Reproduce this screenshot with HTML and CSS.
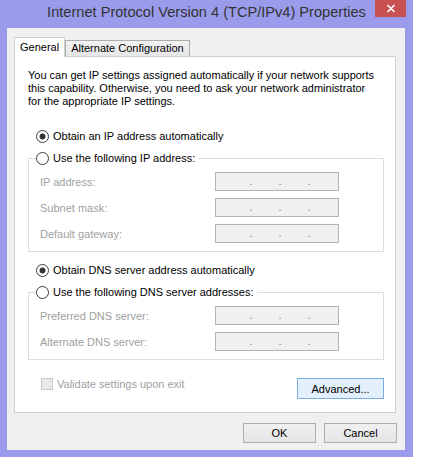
FILE: index.html
```html
<!DOCTYPE html>
<html>
<head>
<meta charset="utf-8">
<title>Internet Protocol Version 4 (TCP/IPv4) Properties</title>
<link rel="stylesheet" href="styles.css">
</head>
<body>
<div class="window">
  <div class="titlebar">
    <span class="title">Internet Protocol Version 4 (TCP/IPv4) Properties</span>
    <button class="close" aria-label="Close">
      <svg width="10" height="9" viewBox="0 0 10 9"><path d="M1.5 1 L8.5 8 M8.5 1 L1.5 8" stroke="#fff" stroke-width="1.6" fill="none"/></svg>
    </button>
  </div>
  <div class="client">
    <div class="tabs">
      <div class="tab active">General</div>
      <div class="tab">Alternate Configuration</div>
    </div>
    <div class="panel">
      <p class="intro">You can get IP settings assigned automatically if your network supports this capability. Otherwise, you need to ask your network administrator for the appropriate IP settings.</p>

      <div class="radio-row first"><span class="radio checked"></span><span>Obtain an IP address automatically</span></div>
      <fieldset class="group">
        <legend><span class="radio-row"><span class="radio"></span><span>Use the following IP address:</span></span></legend>
        <div class="fields">
          <div class="field"><span class="lbl">IP address:</span><span class="ipbox"><span>.</span><span>.</span><span>.</span></span></div>
          <div class="field"><span class="lbl">Subnet mask:</span><span class="ipbox"><span>.</span><span>.</span><span>.</span></span></div>
          <div class="field"><span class="lbl">Default gateway:</span><span class="ipbox"><span>.</span><span>.</span><span>.</span></span></div>
        </div>
      </fieldset>

      <div class="radio-row second"><span class="radio checked"></span><span>Obtain DNS server address automatically</span></div>
      <fieldset class="group">
        <legend><span class="radio-row"><span class="radio"></span><span>Use the following DNS server addresses:</span></span></legend>
        <div class="fields">
          <div class="field"><span class="lbl">Preferred DNS server:</span><span class="ipbox"><span>.</span><span>.</span><span>.</span></span></div>
          <div class="field"><span class="lbl">Alternate DNS server:</span><span class="ipbox"><span>.</span><span>.</span><span>.</span></span></div>
        </div>
      </fieldset>

      <div class="footer-row">
        <div class="check"><span class="box"></span><span>Validate settings upon exit</span></div>
        <button class="btn advanced">Advanced...</button>
      </div>
    </div>
    <div class="buttons">
      <button class="btn">OK</button>
      <button class="btn">Cancel</button>
    </div>
  </div>
</div>
</body>
</html>
```

FILE: styles.css
```css
html, body {
  margin: 0;
  padding: 0;
  background: #ffffff;
}

.window {
  width: 413px;
  height: 457px;
  background: #9a9bea;
  display: flex;
  flex-direction: column;
}

.titlebar {
  height: 28px;
  flex: none;
  display: grid;
  grid-template-columns: 1fr auto 1fr;
  align-items: start;
}

.title {
  grid-column: 2;
  font-family: "Liberation Sans", Arial, sans-serif;
  font-size: 14.6px;
  line-height: 24px;
  color: #333333;
  white-space: nowrap;
}

.close {
  grid-column: 3;
  justify-self: end;
  margin-right: 7px;
  width: 31px;
  height: 17px;
  padding: 0;
  border: 0;
  background: #c75050;
  display: flex;
  align-items: center;
  justify-content: center;
}

.client {
  margin: 0 8px 0 7px;
  height: 422px;
  box-sizing: border-box;
  background: #f0f0f0;
  padding: 9px 9px 0 7px;
  font-family: "Liberation Sans", Arial, sans-serif;
  font-size: 11px;
  color: #000000;
}

.tabs {
  display: flex;
  align-items: flex-end;
  height: 19px;
}

.tab {
  height: 15px;
  line-height: 15px;
  padding: 0 5px;
  border: 1px solid #acacac;
  border-bottom: 0;
  background: linear-gradient(#f2f2f2, #e6e6e6);
  white-space: nowrap;
}

.tab.active {
  height: 19px;
  line-height: 18px;
  margin-bottom: -1px;
  background: #ffffff;
  border-color: #d0d0d0;
  position: relative;
  z-index: 1;
}

.panel {
  width: 382px;
  height: 357px;
  box-sizing: border-box;
  background: #ffffff;
  border: 1px solid #d0d0d0;
  padding: 12px 11px 0 13px;
}

.intro {
  margin: 0;
  line-height: 13px;
  width: 348px;
}

.radio-row {
  display: flex;
  align-items: center;
  gap: 4px;
  height: 16px;
  white-space: nowrap;
}

.radio-row.first {
  margin: 20px 0 0 8px;
}

.radio-row.second {
  margin: 10px 0 0 8px;
}

.radio {
  width: 13px;
  height: 13px;
  box-sizing: border-box;
  border-radius: 50%;
  border: 1px solid #3c3c3c;
  background: #ffffff;
  flex: none;
}

.radio.checked {
  background: radial-gradient(circle, #333333 0 2.6px, #ffffff 3.4px);
}

.group {
  margin: 6px 0 0 0;
  padding: 6px 0 8px 0;
  border: 1px solid #dcdcdc;
  min-width: 0;
}

.group legend {
  margin-left: 7px;
  padding: 0 3px 0 0;
}

.fields {
  display: flex;
  flex-direction: column;
  gap: 7px;
  padding-left: 11px;
}

.field {
  display: grid;
  grid-template-columns: 175px 124px;
  align-items: center;
  height: 19px;
}

.lbl {
  color: #a0a0a0;
}

.ipbox {
  height: 19px;
  box-sizing: border-box;
  border: 1px solid #b4b4b4;
  background: #f0f0f0;
  display: flex;
  padding-left: 32px;
  gap: 23px;
  line-height: 17px;
  color: #7a7a7a;
}

.ipbox span {
  width: 6px;
  text-align: center;
}

.footer-row {
  display: flex;
  justify-content: space-between;
  align-items: flex-start;
  margin-top: 18px;
}

.check {
  display: flex;
  align-items: center;
  gap: 4px;
  margin-left: 13px;
  height: 12px;
  color: #a0a0a0;
}

.check .box {
  width: 12px;
  height: 12px;
  box-sizing: border-box;
  border: 1px solid #c8c8c8;
  background: #e8e8e8;
}

.btn {
  font-family: "Liberation Sans", Arial, sans-serif;
  font-size: 11px;
  color: #000000;
  height: 20px;
  width: 73px;
  padding: 0;
  border: 1px solid #adadad;
  background: linear-gradient(#f0f0f0, #e5e5e5);
}

.btn.advanced {
  width: 87px;
  height: 21px;
  border-color: #7aaee3;
  background: #e3effa;
}

.buttons {
  display: flex;
  justify-content: flex-end;
  gap: 8px;
  margin-top: 10px;
  margin-right: -1px;
}
```
